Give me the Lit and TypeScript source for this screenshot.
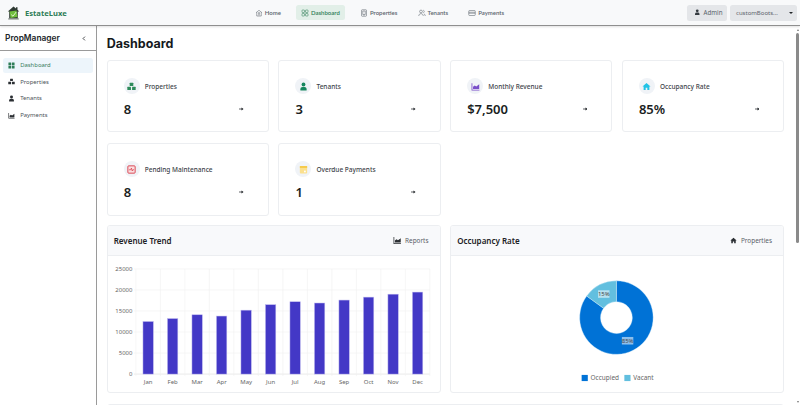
import { LitElement, html, css, svg } from "lit";
import { customElement } from "lit/decorators.js";

const ICONS: Record<string, any> = {
  grid: svg`<rect x="1" y="1" width="6.2" height="6.2" rx=".6"/><rect x="8.8" y="1" width="6.2" height="6.2" rx=".6"/><rect x="1" y="8.8" width="6.2" height="6.2" rx=".6"/><rect x="8.8" y="8.8" width="6.2" height="6.2" rx=".6"/>`,
  boxes: svg`<rect x="4.8" y="1.5" width="6.4" height="5.6" rx=".6"/><rect x=".6" y="8.6" width="6.4" height="5.6" rx=".6"/><rect x="9" y="8.6" width="6.4" height="5.6" rx=".6"/>`,
  user: svg`<circle cx="8" cy="4.5" r="3.4"/><path d="M2.5 15v-2.2c0-2.4 1.7-4 3.8-4h3.4c2.1 0 3.8 1.6 3.8 4V15z"/>`,
  area: svg`<path d="M1 2h1.4v11.6H15V15H1z"/><path d="M3.6 12.4V8.6l3-2.6 2.8 2.2L14.6 4v8.4z"/>`,
  house: svg`<path d="M8 1.6 .8 8h2.1v6.4h3.6v-4h3v4h3.6V8h2.1z"/>`,
};
const ico = (n: string, cls = "") => html`<svg class="ico ${cls}" viewBox="0 0 16 16" fill="currentColor">${ICONS[n]}</svg>`;

const NAV_ICONS: Record<string, any> = {
  Home: svg`<path d="M2 7.5 8 2.5l6 5M3.5 6.5V14h9V6.5"/><path d="M6 11.6h4"/><circle cx="8" cy="8.2" r="1.3"/>`,
  Dashboard: svg`<rect x="2" y="2" width="5" height="5" rx="1"/><rect x="9" y="2" width="5" height="5" rx="1"/><rect x="2" y="9" width="5" height="5" rx="1"/><rect x="9" y="9" width="5" height="5" rx="1"/>`,
  Properties: svg`<rect x="3" y="1.5" width="10" height="13" rx="1.4"/><path d="M5.5 4h5v7h-5zM7 12.8h2"/>`,
  Tenants: svg`<circle cx="6" cy="5" r="2.8"/><path d="M1.5 14c0-3 2-4.6 4.5-4.6s4.5 1.6 4.5 4.6"/><path d="M10.5 2.4a2.7 2.7 0 0 1 0 5.2M12 9.8c1.6.6 2.6 2 2.6 4.2"/>`,
  Payments: svg`<rect x="1.5" y="3" width="13" height="10" rx="1.6"/><path d="M1.5 6.5h13M1.5 8.5h13"/>`,
};

const BARS = [12500, 13200, 14100, 13800, 15200, 16500, 17200, 16900, 17600, 18300, 19000, 19500];
const MONTHS = ["Jan", "Feb", "Mar", "Apr", "May", "Jun", "Jul", "Aug", "Sep", "Oct", "Nov", "Dec"];

@customElement("app-root")
export class AppRoot extends LitElement {
  static styles = css`
    :host { display: flex; flex-direction: column; height: 405px; overflow: hidden; background: #fff; font-family: "Noto Sans", sans-serif; color: #212529; }
    * { box-sizing: border-box; }
    .ico { width: 7px; height: 7px; display: block; flex: none; }

    .top { height: 26px; flex: none; display: flex; align-items: center; background: #f8f9fa; border-bottom: 1px solid #8f8f8f; box-shadow: 0 1px 2px rgba(0,0,0,.12); position: relative; z-index: 2; padding: 0 3px 0 7px; }
    .brand { display: flex; align-items: center; gap: 5px; width: 243px; flex: none; font-size: 7.6px; font-weight: 700; color: #2e7d57; }
    .logo { width: 13px; height: 14px; display: block; }
    .nav { display: flex; align-items: center; }
    .nav a { display: flex; align-items: center; gap: 1.8px; height: 15px; padding: 0 5px; margin-right: 10.3px; border-radius: 2.5px; font: 600 6px Lato, sans-serif; color: #5b646d; }
    .nav a svg { width: 8px; height: 8px; fill: none; stroke: currentColor; stroke-width: 1.1; }
    .nav a.on { background: #e2efe8; color: #2e7d57; }
    .right { margin-left: auto; display: flex; gap: 3px; font-size: 6.2px; color: #5b636b; }
    .admin, .sel { height: 16px; background: #e4e6e9; border-radius: 2.5px; display: flex; align-items: center; }
    .admin { width: 40px; padding-left: 7px; gap: 3px; }
    .admin .ico { width: 6.5px; height: 6.5px; color: #343a40; }
    .sel { width: 67px; padding: 0 4px 0 6px; justify-content: space-between; font-size: 6px; }
    .caret { width: 0; height: 0; border: 2px solid transparent; border-top: 2.6px solid #212529; border-bottom: 0; }

    .body { flex: 1; display: flex; min-height: 0; }
    .side { width: 96.7px; flex: none; border-right: 1px solid #9a9a9a; }
    .side-h { height: 25px; border-bottom: 1px solid #9a9a9a; display: flex; align-items: center; justify-content: space-between; padding: 0 10px 0 5px; font: 600 8.4px Inter, sans-serif; color: #212529; }
    .side-h svg { width: 4px; height: 5px; fill: none; stroke: #212529; stroke-width: 1.3; }
    .menu { padding: 7px 3px 0; display: flex; flex-direction: column; gap: 2px; }
    .menu a { height: 14.6px; display: flex; align-items: center; gap: 5.2px; padding-left: 5px; border-radius: 2.5px; font-size: 5.9px; color: #4c5258; }
    .menu a .ico { color: #2b2f33; }
    .menu a.on { background: #edf5fb; color: #3a7d60; }
    .menu a.on .ico { color: #2e7d57; }

    .main { flex: 1; min-width: 0; overflow: hidden; padding: 0 11px 0 10px; }
    h1 { margin: 0; height: 34px; display: flex; align-items: center; font: 700 12.5px Inter, sans-serif; color: #15191d; }
    .stats { display: grid; grid-template-columns: repeat(4, 1fr); gap: 11px 9.7px; }
    .stat { height: 72.3px; border: 1px solid #eceef1; border-radius: 3px; padding: 17px 16px 0; }
    .stat-h { display: flex; align-items: center; gap: 5px; font-size: 6.5px; color: #3d4349; font-weight: 500; }
    .badge { width: 16px; height: 16px; border-radius: 50%; background: #f0f3f7; display: flex; align-items: center; justify-content: center; flex: none; }
    .badge svg { width: 9px; height: 9px; display: block; }
    .stat-b { display: flex; align-items: center; justify-content: space-between; margin-top: 4.5px; padding-right: 8px; font-size: 13px; font-weight: 600; color: #1a1e22; line-height: 20px; }
    .arrow { width: 4.5px; height: 4px; display: block; }

    .charts { display: grid; grid-template-columns: 1fr 1fr; gap: 9.7px; margin-top: 9.5px; }
    .panel { height: 168.3px; border: 1px solid #eceef1; border-radius: 3px; overflow: hidden; }
    .panel-h { height: 30px; background: #f8f9fb; border-bottom: 1px solid #eceef1; display: flex; align-items: center; justify-content: space-between; padding: 0 11px 0 6px; font-size: 8px; font-weight: 600; color: #1d2125; }
    .panel-l { display: flex; align-items: center; gap: 4px; font-size: 6.4px; font-weight: 400; color: #596067; }
    .panel-l .ico { color: #2b2f33; }
    .panel-l .ico.big { width: 8.5px; height: 8.5px; }
    .chart { display: block; width: 100%; height: 137px; }
    .chart text { font-family: "Noto Sans", sans-serif; font-size: 6px; fill: #666; }
    .chart .dl { fill: #444; font-size: 6px; }
    .chart .lg { font-size: 6.5px; fill: #666; }
    .peek { height: 40px; margin-top: 10.6px; border: 1px solid #eceef1; border-radius: 3px; }

    .bar { width: 5px; flex: none; display: flex; flex-direction: column; align-items: center; }
    .bar .up, .bar .dn { height: 7px; display: flex; align-items: center; justify-content: center; flex: none; }
    .tri { width: 0; height: 0; border: 1.6px solid transparent; }
    .up .tri { border-bottom: 2px solid #777; border-top: 0; }
    .dn .tri { border-top: 2px solid #777; border-bottom: 0; }
    .track { flex: 1; width: 100%; padding: 0 1px; }
    .thumb { width: 3px; height: 210px; background: #8a8a8a; border-radius: 1.5px; }
  `;

  statCard(label: string, value: string, icon: any) {
    return html`<div class="stat">
      <div class="stat-h"><span class="badge">${icon}</span>${label}</div>
      <div class="stat-b"><span>${value}</span>
        <svg class="arrow" viewBox="0 0 9 8"><path d="M0 4h6" stroke="#1a1e22" stroke-width="1.4"/><path d="M5 .8 9 4 5 7.2z" fill="#1a1e22"/></svg>
      </div>
    </div>`;
  }

  barChart() {
    const x0 = 28, x1 = 323, top = 13, bottom = 118.5;
    const y = (v: number) => bottom - (v / 25000) * (bottom - top);
    const step = (x1 - x0) / 12;
    return svg`<svg class="chart" viewBox="0 0 333 137" preserveAspectRatio="xMinYMin meet">
      ${[0, 5000, 10000, 15000, 20000, 25000].map(v => svg`
        <line x1="${x0 - 2}" x2="${x1}" y1="${y(v)}" y2="${y(v)}" stroke="${v === 0 ? "#ddd" : "#f0f0f0"}" stroke-width=".6"/>
        <text x="${x0 - 3.5}" y="${y(v) + 2.1}" text-anchor="end">${v}</text>`)}
      ${Array.from({ length: 13 }, (_, i) => svg`<line x1="${x0 + i * step}" x2="${x0 + i * step}" y1="${top}" y2="${bottom + 2}" stroke="#f0f0f0" stroke-width=".6"/>`)}
      ${BARS.map((v, i) => svg`
        <rect x="${x0 + i * step + step / 2 - 5.2}" y="${y(v)}" width="10.4" height="${bottom - y(v)}" fill="#4338c6" stroke="#bdb8ee" stroke-width=".5"/>
        <text x="${x0 + i * step + step / 2}" y="${bottom + 9.5}" text-anchor="middle">${MONTHS[i]}</text>`)}
    </svg>`;
  }

  donut() {
    const cx = 166.5, cy = 62, R = 37, r = 16;
    const a = (-54 * Math.PI) / 180;
    const px = cx + R * Math.sin(a), py = cy - R * Math.cos(a);
    const qx = cx + r * Math.sin(a), qy = cy - r * Math.cos(a);
    const occ = `M${cx} ${cy - R}A${R} ${R} 0 1 1 ${px} ${py}L${qx} ${qy}A${r} ${r} 0 1 0 ${cx} ${cy - r}Z`;
    const vac = `M${px} ${py}A${R} ${R} 0 0 1 ${cx} ${cy - R}L${cx} ${cy - r}A${r} ${r} 0 0 0 ${qx} ${qy}Z`;
    return svg`<svg class="chart" viewBox="0 0 334 137" preserveAspectRatio="xMinYMin meet">
      <path d="${occ}" fill="#0072d6" stroke="#d5eefa" stroke-width=".4"/>
      <path d="${vac}" fill="#62bfdf" stroke="#d5eefa" stroke-width=".4"/>
      <rect x="148" y="34.5" width="11.5" height="7.6" fill="#fff" opacity=".55"/>
      <text class="dl" x="153.8" y="40.4" text-anchor="middle">15%</text>
      <rect x="172" y="81.5" width="11.5" height="7.6" fill="#fff" opacity=".55"/>
      <text class="dl" x="177.8" y="87.4" text-anchor="middle">85%</text>
      <rect x="131.5" y="119.7" width="6.2" height="6.2" fill="#0072d6"/>
      <text class="lg" x="140.5" y="125.3">Occupied</text>
      <rect x="174.5" y="119.7" width="6.2" height="6.2" fill="#62bfdf"/>
      <text class="lg" x="183.5" y="125.3">Vacant</text>
    </svg>`;
  }

  render() {
    const navs = ["Home", "Dashboard", "Properties", "Tenants", "Payments"];
    const chev = html`<svg viewBox="0 0 6 8"><path d="M4.5 1 1.5 4l3 3"/></svg>`;
    return html`
      <header class="top">
        <div class="brand">
          <svg class="logo" viewBox="0 0 13 14">
            <path d="M6.5 .6 .8 5.6h1.4v7h8.6v-7h1.4L10.5 3.8V1.2H9v1.4z" fill="#2f3a33"/>
            <rect x="3" y="5" width="7" height="6.6" fill="#6fbe3d" transform="rotate(-8 6.5 8)"/>
            <path d="M4.2 8.6 6 10.2 9.2 6" fill="none" stroke="#e8f6d8" stroke-width=".9"/>
            <rect x="1.2" y="12.2" width="10.6" height="1.3" rx=".5" fill="#7c857f"/>
          </svg>
          EstateLuxe
        </div>
        <nav class="nav">
          ${navs.map(n => html`<a class="${n === "Dashboard" ? "on" : ""}"><svg viewBox="0 0 16 16">${NAV_ICONS[n]}</svg>${n}</a>`)}
        </nav>
        <div class="right">
          <div class="admin">${ico("user")}Admin</div>
          <div class="sel">customBoots...<span class="caret"></span></div>
        </div>
      </header>
      <div class="body">
        <aside class="side">
          <div class="side-h">PropManager ${chev}</div>
          <div class="menu">
            <a class="on">${ico("grid")}Dashboard</a>
            <a>${ico("boxes")}Properties</a>
            <a>${ico("user")}Tenants</a>
            <a>${ico("area")}Payments</a>
          </div>
        </aside>
        <main class="main">
          <h1>Dashboard</h1>
          <div class="stats">
            ${this.statCard("Properties", "8", svg`<svg viewBox="0 0 16 16" fill="#2e8b5b">${ICONS.boxes}</svg>`)}
            ${this.statCard("Tenants", "3", svg`<svg viewBox="0 0 16 16" fill="#17875f">${ICONS.user}</svg>`)}
            ${this.statCard("Monthly Revenue", "$7,500", svg`<svg viewBox="0 0 16 16" fill="#7a4fc9">${ICONS.area}</svg>`)}
            ${this.statCard("Occupancy Rate", "85%", svg`<svg viewBox="0 0 16 16" fill="#22c3e6">${ICONS.house}</svg>`)}
            ${this.statCard("Pending Maintenance", "8", svg`<svg viewBox="0 0 16 16"><rect x="1.5" y="1.5" width="13" height="13" rx="1.5" fill="#fbdfe1" stroke="#d5303e" stroke-width="1.5"/><path d="M3.5 8.5h3l1.4-3 1.4 5 1-2h2.2" fill="none" stroke="#d5303e" stroke-width="1.2"/></svg>`)}
            ${this.statCard("Overdue Payments", "1", svg`<svg viewBox="0 0 16 16"><rect x="1.5" y="2" width="13" height="13" rx="1.5" fill="#fbe08e"/><rect x="1.5" y="2" width="13" height="3" fill="#f4c63f"/><rect x="9" y="10" width="3" height="3" fill="#fff"/></svg>`)}
          </div>
          <div class="charts">
            <section class="panel">
              <div class="panel-h">Revenue Trend <span class="panel-l">${ico("area", "big")}Reports</span></div>
              ${this.barChart()}
            </section>
            <section class="panel">
              <div class="panel-h">Occupancy Rate <span class="panel-l">${ico("house")}Properties</span></div>
              ${this.donut()}
            </section>
          </div>
          <div class="peek"></div>
        </main>
        <div class="bar">
          <div class="up"><span class="tri"></span></div>
          <div class="track"><div class="thumb"></div></div>
          <div class="dn"><span class="tri"></span></div>
        </div>
      </div>
    `;
  }
}
